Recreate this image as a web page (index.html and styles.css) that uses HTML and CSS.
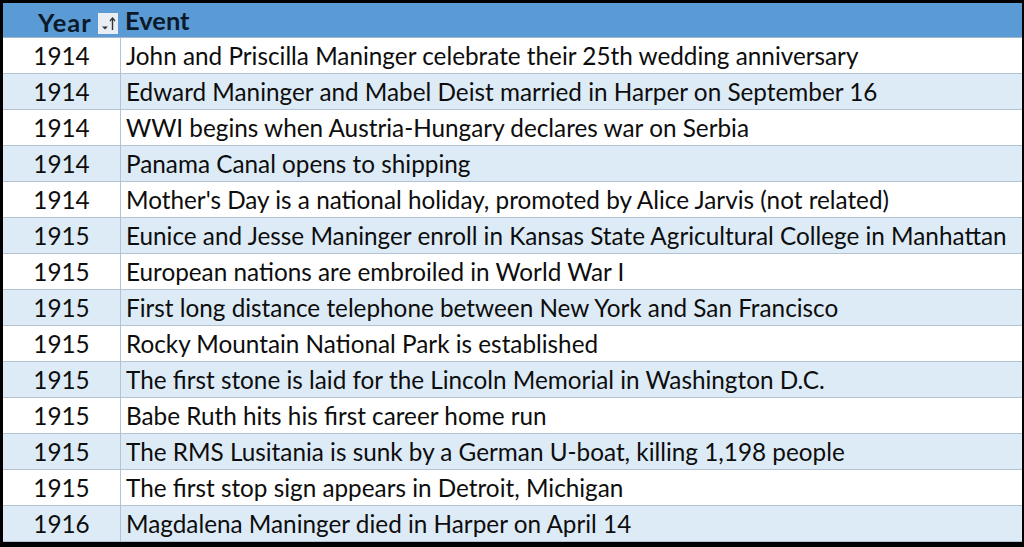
FILE: index.html
```html
<!DOCTYPE html>
<html>
<head>
<meta charset="utf-8">
<link rel="stylesheet" href="styles.css">
</head>
<body>
<div class="frame">
  <table class="events">
    <thead>
      <tr>
        <th class="year-h"><span class="hlabel">Year</span><span class="sort"><svg width="20" height="21" viewBox="0 0 20 21"><path d="M4 13.5 L10 13.5 L7 16.5 Z" fill="#333"/><path d="M14.5 17 L14.5 5.5" stroke="#333" stroke-width="1.4"/><path d="M12 8 L14.5 5 L17 8" fill="none" stroke="#333" stroke-width="1.3"/></svg></span></th>
        <th class="event-h">Event</th>
      </tr>
    </thead>
    <tbody>
      <tr><td class="y">1914</td><td class="e">John and Priscilla Maninger celebrate their 25th wedding anniversary</td></tr>
      <tr><td class="y">1914</td><td class="e">Edward Maninger and Mabel Deist married in Harper on September 16</td></tr>
      <tr><td class="y">1914</td><td class="e">WWI begins when Austria-Hungary declares war on Serbia</td></tr>
      <tr><td class="y">1914</td><td class="e">Panama Canal opens to shipping</td></tr>
      <tr><td class="y">1914</td><td class="e">Mother's Day is a national holiday, promoted by Alice Jarvis (not related)</td></tr>
      <tr><td class="y">1915</td><td class="e">Eunice and Jesse Maninger enroll in Kansas State Agricultural College in Manhattan</td></tr>
      <tr><td class="y">1915</td><td class="e">European nations are embroiled in World War I</td></tr>
      <tr><td class="y">1915</td><td class="e">First long distance telephone between New York and San Francisco</td></tr>
      <tr><td class="y">1915</td><td class="e">Rocky Mountain National Park is established</td></tr>
      <tr><td class="y">1915</td><td class="e">The first stone is laid for the Lincoln Memorial in Washington D.C.</td></tr>
      <tr><td class="y">1915</td><td class="e">Babe Ruth hits his first career home run</td></tr>
      <tr><td class="y">1915</td><td class="e">The RMS Lusitania is sunk by a German U-boat, killing 1,198 people</td></tr>
      <tr><td class="y">1915</td><td class="e">The first stop sign appears in Detroit, Michigan</td></tr>
      <tr><td class="y">1916</td><td class="e">Magdalena Maninger died in Harper on April 14</td></tr>
    </tbody>
  </table>
</div>
</body>
</html>
```

FILE: styles.css
```css
html, body {
  margin: 0;
  padding: 0;
  background: #000;
}
body {
  width: 1024px;
  height: 547px;
  overflow: hidden;
}
.frame {
  padding: 3px 2px 0 3px;
}
.events {
  width: 1019px;
  border-collapse: collapse;
  table-layout: fixed;
  font-family: Lato, "Liberation Sans", sans-serif;
  font-size: 24.3px;
  color: #0d0d0d;
}
.events th {
  background: #5b9bd5;
  height: 34px;
  padding: 0;
  font-weight: bold;
  font-size: 25.5px;
  text-align: left;
  color: #0b1a2a;
  border-bottom: 1px solid #9fb6cc;
}
.year-h {
  width: 117px;
  border-right: 1px solid #5b9bd5;
}
.hlabel {
  display: inline-block;
  margin-left: 35px;
  letter-spacing: 1px;
  vertical-align: middle;
}
.sort {
  display: inline-block;
  width: 20px;
  height: 21px;
  margin-left: 6px;
  background: #e9eef4;
  vertical-align: middle;
  position: relative;
  top: 2px;
}
.sort svg {
  display: block;
}
.event-h {
  padding-left: 4px !important;
}
.events td {
  height: 35px;
  padding: 0;
  border-bottom: 1px solid #b3c3d3;
  background: #fff;
}
.events tbody tr:nth-child(even) td {
  background: #ddebf7;
}
.y {
  text-align: center;
  border-right: 1px solid #b3c3d3;
}
.e {
  padding-left: 5px !important;
  white-space: nowrap;
}
```
